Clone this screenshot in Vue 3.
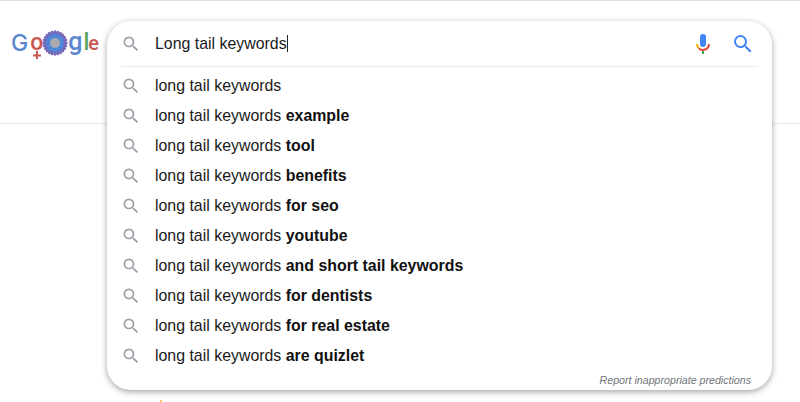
<script setup>
const suggestions = [
  '',
  'example',
  'tool',
  'benefits',
  'for seo',
  'youtube',
  'and short tail keywords',
  'for dentists',
  'for real estate',
  'are quizlet',
]
const petals = Array.from({ length: 24 }, (_, i) => i * 15)
const searchPath = 'M15.5 14h-.79l-.28-.27A6.47 6.47 0 0 0 16 9.5 6.5 6.5 0 1 0 9.5 16c1.61 0 3.09-.59 4.23-1.57l.27.28v.79l5 4.99L20.49 19l-4.99-5zm-6 0C7.01 14 5 11.99 5 9.5S7.01 5 9.5 5 14 7.01 14 9.5 11.99 14 9.5 14z'
</script>

<template>
  <div class="page">
    <header class="header">
      <div class="logo">
        <span class="blue cap">G</span>
        <span class="venus red">o<svg class="venus-stem" viewBox="0 0 8 8" width="8" height="8"><path d="M4 0v8M0 4.6h8" stroke="#c8584f" stroke-width="2" fill="none" /></svg></span>
        <svg class="flower" viewBox="0 0 26 26" width="26" height="26">
          <circle cx="13" cy="13" r="11.6" fill="#6a6fc0" />
          <circle
            v-for="a in petals"
            :key="a"
            cx="13"
            cy="1.6"
            r="1.3"
            fill="#7f6bb8"
            :transform="`rotate(${a} 13 13)`"
          />
          <circle cx="13" cy="13" r="8.8" fill="#4f86d8" />
          <circle cx="13" cy="13" r="5" fill="#ababab" />
        </svg>
        <span class="blue low-g">g</span>
        <span class="green">l</span>
        <span class="red low-e">e</span>
      </div>
    </header>

    <section class="panel">
      <div class="search-row">
        <svg class="icon" viewBox="0 0 24 24" width="20" height="20">
          <path :d="searchPath" fill="#9aa0a6" />
        </svg>
        <div class="query">Long tail keywords<span class="caret"></span></div>
        <svg class="mic" viewBox="0 0 24 24" width="24" height="24">
          <path d="M12 15a3 3 0 0 0 3-3V5a3 3 0 0 0-6 0v7a3 3 0 0 0 3 3z" fill="#4285f4" />
          <path d="M11 18.9h2V22h-2z" fill="#34a853" />
          <path d="M7 12H5c0 1.9.8 3.6 2 4.9l1.4-1.4A5 5 0 0 1 7 12z" fill="#f4b400" />
          <path d="M12 17a5 5 0 0 1-3.6-1.5L7 16.9A7 7 0 0 0 12 19a7 7 0 0 0 7-7h-2a5 5 0 0 1-5 5z" fill="#ea4335" />
        </svg>
        <svg class="go" viewBox="0 0 24 24" width="24" height="24">
          <path :d="searchPath" fill="#4285f4" />
        </svg>
      </div>
      <ul class="list">
        <li v-for="s in suggestions" :key="s" class="item">
          <svg class="icon" viewBox="0 0 24 24" width="20" height="20">
            <path :d="searchPath" fill="#9aa0a6" />
          </svg>
          <span class="text">long tail keywords<b v-if="s">{{ ' ' + s }}</b></span>
        </li>
      </ul>
      <div class="report">Report inappropriate predictions</div>
    </section>
    <i class="speck"></i>
  </div>
</template>

<style>
html, body { margin: 0; background: #fff; }
</style>

<style scoped>
.page {
  position: relative;
  width: 800px;
  height: 402px;
  overflow: hidden;
  background: #fff;
  font-family: "Liberation Sans", Arial, sans-serif;
  border-top: 1px solid #dfdfdf;
  box-sizing: border-box;
}
.header {
  height: 123px;
  border-bottom: 1px solid #ebebeb;
  padding: 27px 0 0 11px;
  box-sizing: border-box;
}
.logo {
  display: flex;
  align-items: center;
  height: 30px;
  font-family: Roboto, sans-serif;
  font-weight: 500;
  font-size: 23px;
  line-height: 30px;
}
.cap { font-family: Inter, sans-serif; font-size: 23px; margin-right: 2px; }
.low-g { font-size: 25px; margin-top: -2px; }
.low-e { font-size: 20px; margin-left: -1px; }
.blue { color: #5a87cf; }
.red { color: #c8584f; }
.green { color: #5da466; margin: 0 0 0 1px; }
.venus { position: relative; margin: 0 -1px 0 0; }
.venus-stem {
  position: absolute;
  left: 3px;
  top: 23px;
}
.panel {
  position: absolute;
  left: 107px;
  top: 20px;
  width: 665px;
  height: 369px;
  background: #fff;
  border-radius: 24px;
  box-shadow: 0 2px 6px rgba(32, 33, 36, 0.4);
  box-sizing: border-box;
  padding: 0 14px;
}
.search-row {
  display: flex;
  align-items: center;
  height: 45px;
  border-bottom: 1px solid #e8eaed;
}
.icon { flex: none; margin-right: 14px; }
.query {
  flex: 1;
  font-size: 15.9px;
  color: #1a1a1a;
  display: flex;
  align-items: center;
}
.caret {
  display: inline-block;
  width: 1px;
  height: 17px;
  background: #202124;
}
.mic { margin-right: 16px; }
.go { margin-right: 3px; }
.list {
  list-style: none;
  margin: 4px 0 0;
  padding: 0;
}
.item {
  display: flex;
  align-items: center;
  height: 30px;
}
.text {
  font-size: 15.9px;
  color: #1a1a1a;
  white-space: pre;
}
.text b { color: #111; font-weight: 700; }
.report {
  position: absolute;
  right: 21px;
  bottom: 4px;
  font-size: 10.65px;
  font-style: italic;
  color: #70757a;
}
.speck {
  position: absolute;
  left: 160px;
  top: 399px;
  width: 2px;
  height: 2px;
  background: #f0c35a;
}
</style>
